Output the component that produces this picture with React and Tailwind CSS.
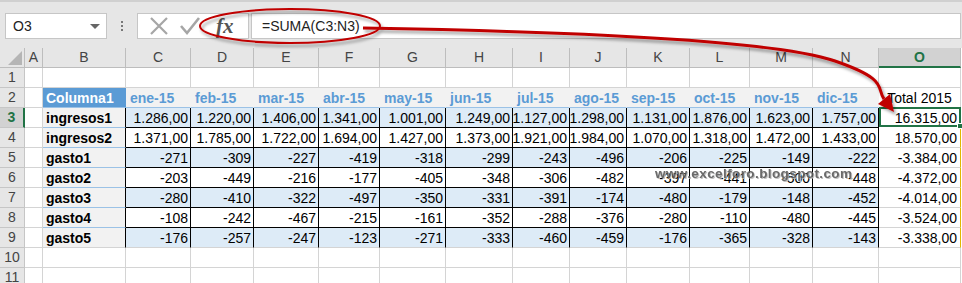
import React from 'react';

// Hoja de cálculo: suma de ingresos y gastos por mes
const months = ['ene-15', 'feb-15', 'mar-15', 'abr-15', 'may-15', 'jun-15', 'jul-15', 'ago-15', 'sep-15', 'oct-15', 'nov-15', 'dic-15'];
const letters = ['A', 'B', 'C', 'D', 'E', 'F', 'G', 'H', 'I', 'J', 'K', 'L', 'M', 'N', 'O'];

const data = [
  ['ingresos1', ['1.286,00', '1.220,00', '1.406,00', '1.341,00', '1.001,00', '1.249,00', '1.127,00', '1.298,00', '1.131,00', '1.876,00', '1.623,00', '1.757,00'], '16.315,00'],
  ['ingresos2', ['1.371,00', '1.785,00', '1.722,00', '1.694,00', '1.427,00', '1.373,00', '1.921,00', '1.984,00', '1.070,00', '1.318,00', '1.472,00', '1.433,00'], '18.570,00'],
  ['gasto1', ['-271', '-309', '-227', '-419', '-318', '-299', '-243', '-496', '-206', '-225', '-149', '-222'], '-3.384,00'],
  ['gasto2', ['-203', '-449', '-216', '-177', '-405', '-348', '-306', '-482', '-397', '-441', '-500', '-448'], '-4.372,00'],
  ['gasto3', ['-280', '-410', '-322', '-497', '-350', '-331', '-391', '-174', '-480', '-179', '-148', '-452'], '-4.014,00'],
  ['gasto4', ['-108', '-242', '-467', '-215', '-161', '-352', '-288', '-376', '-280', '-110', '-480', '-445'], '-3.524,00'],
  ['gasto5', ['-176', '-257', '-247', '-123', '-271', '-333', '-460', '-459', '-176', '-365', '-328', '-143'], '-3.338,00'],
];

const cell = 'h-5 flex items-center whitespace-nowrap overflow-hidden border-r border-b pt-[2px]';
const grid = 'border-[#d4d4d4] bg-white';

const RowHead = ({ n, active }) => (
  <div
    className={
      active
        ? 'h-5 flex items-center justify-center bg-[#d2d2d2] text-[#217346] font-bold border-b border-[#c6c6c6] border-r-2 border-r-[#217346]'
        : 'h-5 flex items-center justify-center bg-[#e6e6e6] text-[#444] border-b border-r border-[#c6c6c6]'
    }
  >
    {n}
  </div>
);

const Empty = ({ count }) =>
  [...Array(count)].map((_, i) => <div key={i} className={`${cell} ${grid}`} />);

const Toolbar = () => (
  <div className="h-12 bg-[#e6e6e6] border-t-2 border-[#d0d0d0] flex items-start pt-[11px]">
    <div className="ml-[5px] w-[102px] h-[26px] bg-white border border-[#c6c6c6] flex items-center justify-between pl-[7px] pr-[6px] text-[14px] text-[#222]">
      <span>O3</span>
      <span className="w-0 h-0 border-l-[5px] border-r-[5px] border-t-[5px] border-l-transparent border-r-transparent border-t-[#666]" />
    </div>
    <div className="w-[30px] h-[26px] flex flex-col items-center justify-center gap-[2px]">
      <span className="w-[2px] h-[2px] bg-[#777]" />
      <span className="w-[2px] h-[2px] bg-[#777]" />
      <span className="w-[2px] h-[2px] bg-[#777]" />
    </div>
    <div className="w-[112px] h-[26px] bg-white border border-[#c6c6c6] flex items-center">
      <svg width="40" height="24" viewBox="0 0 40 24" className="ml-[1px]">
        <path d="M12 4 L28 20 M28 4 L12 20" stroke="#a6a6a6" strokeWidth="2.2" fill="none" />
      </svg>
      <svg width="24" height="24" viewBox="0 0 24 24" className="-ml-[2px]">
        <path d="M4 12 L10 19 L22 4" stroke="#a6a6a6" strokeWidth="2.6" fill="none" />
      </svg>
      <span className="ml-[15px] font-['Liberation_Serif',serif] italic font-bold text-[21px] text-[#555] leading-none">fx</span>
    </div>
    <div className="ml-[2px] w-[710px] h-[26px] bg-white border border-[#c6c6c6] flex items-center pl-[10px] text-[14px] text-[#222]">
      =SUMA(C3:N3)
    </div>
  </div>
);

const Overlay = () => (
  <svg className="absolute left-0 top-0 pointer-events-none" width="962" height="283" viewBox="0 0 962 283">
    <defs>
      <filter id="sh" x="-10%" y="-30%" width="130%" height="180%">
        <feDropShadow dx="2" dy="3" stdDeviation="1.5" floodColor="#000" floodOpacity="0.35" />
      </filter>
    </defs>
    <g filter="url(#sh)">
      <ellipse cx="290" cy="26" rx="90" ry="17" fill="none" stroke="#c00000" strokeWidth="2" />
      <path d="M363 28 C600 32, 780 42, 835 61 S876 88, 884 99" fill="none" stroke="#c00000" strokeWidth="3" />
      <polygon points="894,112 878,104 890,94" fill="#c00000" />
    </g>
  </svg>
);

export default function App() {
  return (
    <div className="relative w-[962px] h-[283px] overflow-hidden bg-white font-['Liberation_Sans',Arial,sans-serif] text-[14px] text-black">
      <Toolbar />

      <div className="grid grid-cols-[25px_18px_83px_65px_63px_65px_61px_66px_67px_57px_57px_63px_60px_63px_66px_82px]">
        {/* cabecera de columnas */}
        <div className="h-5 bg-[#e6e6e6] border-r border-b border-[#bdbdbd] flex items-end justify-end p-[2px]">
          <span className="w-0 h-0 border-l-[14px] border-t-[14px] border-l-transparent border-t-transparent border-b-0 border-r-0 relative">
            <span className="absolute -left-[14px] -top-[14px] w-0 h-0 border-b-[14px] border-l-[14px] border-b-[#b5b5b5] border-l-transparent" />
          </span>
        </div>
        {letters.map((l) =>
          l === 'O' ? (
            <div key={l} className="h-5 flex items-center justify-center bg-[#d2d2d2] text-[#217346] font-bold border-r border-[#bdbdbd] border-b-2 border-b-[#217346]">
              {l}
            </div>
          ) : (
            <div key={l} className="h-5 flex items-center justify-center bg-[#e6e6e6] text-[#444] border-r border-b border-[#bdbdbd]">
              {l}
            </div>
          )
        )}

        {/* fila 1 */}
        <RowHead n={1} />
        <Empty count={15} />

        {/* fila 2: encabezado de tabla */}
        <RowHead n={2} />
        <div className={`${cell} ${grid}`} />
        <div className={`${cell} bg-[#5b9bd5] border-r-[#5b9bd5] border-b-[#9bc2e6] text-white font-bold pl-[3px]`}>Columna1</div>
        {months.map((m) => (
          <div key={m} className={`${cell} bg-[#f2f2f2] border-r-[#f2f2f2] border-b-[#9bc2e6] text-[#5b9bd5] font-bold pl-[4px]`}>
            {m}
          </div>
        ))}
        <div className={`${cell} ${grid} justify-center`}>Total 2015</div>

        {/* filas de datos */}
        {data.map(([name, vals, total], r) => {
          const rowNum = r + 3;
          const banded = r % 2 === 0;
          const last = r === data.length - 1;
          return (
            <React.Fragment key={name}>
              <RowHead n={rowNum} active={rowNum === 3} />
              <div className={`${cell} ${grid}`} />
              <div
                className={
                  last
                    ? `${cell} bg-[#f2f2f2] border-r-black border-b-[#d4d4d4] font-bold pl-[3px]`
                    : `${cell} bg-[#f2f2f2] border-r-black border-b-[#9bc2e6] font-bold pl-[3px]`
                }
              >
                {name}
              </div>
              {vals.map((v, i) => (
                <div
                  key={i}
                  className={
                    banded
                      ? last
                        ? `${cell} bg-[#ddebf7] border-r-black border-b-[#d4d4d4] justify-end pr-[2px]`
                        : `${cell} bg-[#ddebf7] border-r-black border-b-black justify-end pr-[2px]`
                      : `${cell} bg-white border-r-black border-b-black justify-end pr-[2px]`
                  }
                >
                  {v}
                </div>
              ))}
              {rowNum === 3 ? (
                <div className="relative h-5 bg-white border-2 border-[#217346] -mt-px flex items-center justify-end pr-[2px] pt-[2px]">
                  {total}
                  <span className="absolute -right-[4px] -bottom-[4px] w-[6px] h-[6px] bg-[#217346] border border-white" />
                </div>
              ) : (
                <div className={`${cell} bg-white border-b-[#d4d4d4] border-r-[#e0b800] justify-end pr-[3px]`}>{total}</div>
              )}
            </React.Fragment>
          );
        })}

        {/* filas 10 y 11 */}
        <RowHead n={10} />
        <Empty count={15} />
        <RowHead n={11} />
        <Empty count={15} />
      </div>

      {/* marca de agua */}
      <div className="absolute left-[655px] top-[164px] text-[13.5px] font-bold text-[#5a5a5a] opacity-90 [text-shadow:1px_1px_0_#bbb] tracking-[0.4px] pointer-events-none">
        www.excelforo.blogspot.com
      </div>

      <Overlay />
    </div>
  );
}
